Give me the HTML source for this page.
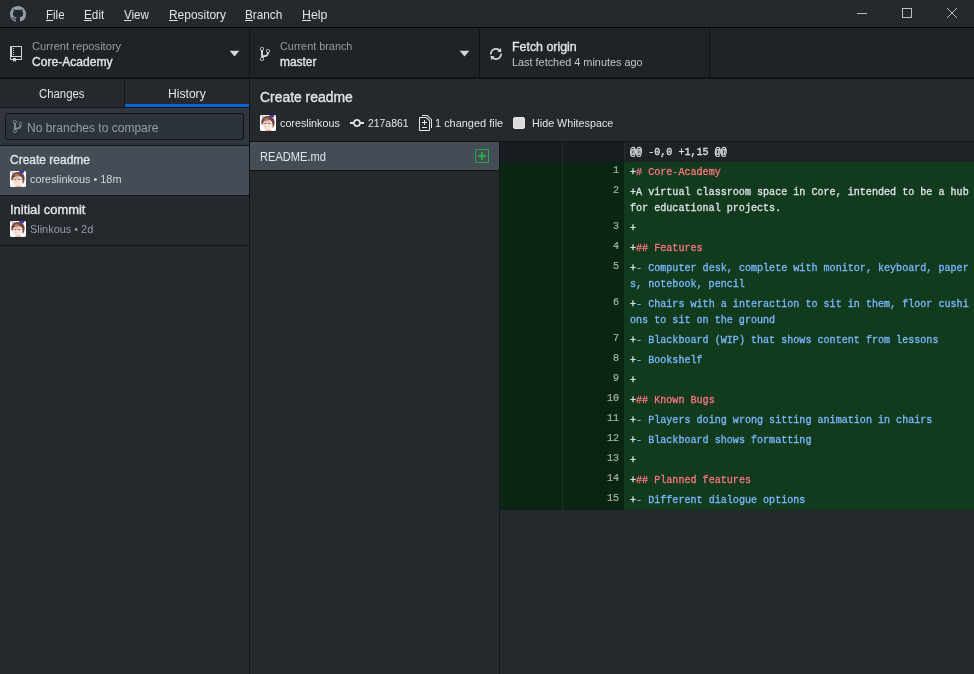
<!DOCTYPE html>
<html><head><meta charset="utf-8">
<style>
*{box-sizing:border-box;margin:0;padding:0}
html,body{width:974px;height:674px;overflow:hidden;background:#24292e;color:#d1d5da;font-family:"Liberation Sans",sans-serif;font-size:12px}
#titlebar{position:absolute;left:0;top:0;width:974px;height:28px;background:#24292e;border-bottom:1px solid #000}
#titlebar .menu{position:absolute;top:1px;transform-origin:0 0;height:27px;line-height:28px;font-size:12.5px;color:#e1e4e8;white-space:nowrap}
#titlebar .menu u{text-decoration:underline;text-underline-offset:1px}
#toolbar{position:absolute;left:0;top:28px;width:974px;height:51px;background:#1f2327;border-bottom:2px solid #121212;z-index:2}
.tb{position:absolute;top:0;height:49px;border-right:1px solid #141414}
.tb .t1{transform-origin:0 0;position:absolute;left:32px;top:11px;font-size:11.5px;color:#959da5;white-space:nowrap;line-height:14px}
.tb .t2{transform-origin:0 0;position:absolute;left:32px;top:27px;font-size:12px;font-weight:normal;-webkit-text-stroke:0.35px;color:#e1e4e8;white-space:nowrap;line-height:14px}
.tb svg{position:absolute}
.arrow{position:absolute;width:0;height:0;border-left:4.800px solid transparent;border-right:4.800px solid transparent;border-top:5.500px solid #d1d5da;top:22.700px}
#sidebar{position:absolute;left:0;top:78px;width:250px;height:596px;background:#24292e;border-right:1px solid #141414}
#tabs{position:absolute;left:0;top:0;width:249px;height:30px;border-bottom:1px solid #141414}
#tabs div{position:absolute;top:0;height:29px;}
#tabs span{position:absolute;top:1px;line-height:30px;font-size:12.5px;color:#e1e4e8;transform-origin:0 0;white-space:nowrap}
#tabs .a{left:0;width:125px;border-right:1px solid #141414}
#tabs .b{left:125px;width:124px;border-bottom:3px solid #0366d6;height:29px}
#filterrow{position:absolute;left:0;top:30px;width:249px;height:38px;background:#2f363d;border-bottom:1px solid #141414}
#filter{position:absolute;left:5px;top:5px;width:239px;height:27px;border:1px solid #141414;border-radius:3px;background:#2d333a;}
#filter span{position:absolute;left:21px;top:2px;line-height:25px;font-size:12.5px;color:#959da5;white-space:nowrap;transform-origin:0 0}
.commit{position:absolute;left:0;width:249px;height:50px;border-bottom:1px solid #141414}
.commit .s{transform-origin:0 0;position:absolute;left:10px;top:7px;font-weight:normal;-webkit-text-stroke:0.35px;font-size:12px;line-height:14px;white-space:nowrap;color:#e1e4e8}
.commit .av{position:absolute;left:10px;top:25px}
.commit .m{transform-origin:0 0;position:absolute;left:30px;top:26px;font-size:11.5px;line-height:14px;white-space:nowrap;color:#d1d5da}
.av{width:16px;height:16px;border-radius:2px;background:#fbf8f8;overflow:hidden;display:block}
#main{position:absolute;left:250px;top:78px;width:724px;height:596px;background:#24292e}
#summary{position:absolute;left:0;top:0;width:724px;height:64px;border-bottom:1px solid #141414}
#summary h1{transform-origin:0 0;position:absolute;left:10px;top:11px;font-size:14px;line-height:16px;font-weight:normal;-webkit-text-stroke:0.35px;color:#e1e4e8;white-space:nowrap}
#summary .i{transform-origin:0 0;position:absolute;top:38px;font-size:11.5px;line-height:14px;white-space:nowrap;color:#e1e4e8}
#files{position:absolute;left:0;top:64px;width:250px;height:532px;border-right:1px solid #141414}
#files .row{position:absolute;left:0;top:0;width:249px;height:29px;background:#444d56;border-bottom:1px solid #141414}
#files .row span{position:absolute;left:10px;top:1px;line-height:29px;font-size:12px;color:#e1e4e8;transform-origin:0 0}
#diff{position:absolute;left:250px;top:64px;width:474px;height:532px;font-family:"Liberation Mono",monospace;font-size:10.08px;will-change:transform}
.ln{position:absolute;left:0;width:474px;}
.ln .g1{position:absolute;left:0;top:0;width:63px;height:100%;border-right:1px solid #123a1c;background:#0a2612}
.ln .g2{position:absolute;left:63px;top:0;width:62px;height:100%;border-right:1px solid #123a1c;background:#0a2612;color:#a6b2a9;-webkit-text-stroke:0.2px;text-align:right;padding-right:5px;font-size:10.08px;line-height:18px}
.ln .c{position:absolute;left:125px;top:0;width:349px;height:100%;background:#123a1c;padding-left:5px;line-height:16px;padding-top:3px;white-space:pre;color:#dde2e6;-webkit-text-stroke:0.3px}
.hk .g1,.hk .g2{background:#181c20;border-right-color:#2a2f35}.hk .c{background:#1e2227;color:#dfe3e7}
.h{color:#f97583}.l{color:#79b8ff}
</style></head><body>
<svg width="0" height="0" style="position:absolute"><filter id="bl"><feGaussianBlur stdDeviation="0.45"/></filter></svg>
<div id="titlebar">
<svg style="position:absolute;left:10px;top:6px" width="16" height="16" viewBox="0 0 16 16"><path fill="#959da5" fill-rule="evenodd" d="M8 0C3.58 0 0 3.58 0 8c0 3.54 2.29 6.53 5.47 7.59.4.07.55-.17.55-.38 0-.19-.01-.82-.01-1.49-2.01.37-2.53-.49-2.69-.94-.09-.23-.48-.94-.82-1.13-.28-.15-.68-.52-.01-.53.63-.01 1.08.58 1.23.82.72 1.21 1.87.87 2.33.66.07-.52.28-.87.51-1.07-1.78-.2-3.64-.89-3.64-3.95 0-.87.31-1.59.82-2.15-.08-.2-.36-1.02.08-2.12 0 0 .67-.21 2.2.82.64-.18 1.32-.27 2-.27.68 0 1.36.09 2 .27 1.53-1.04 2.2-.82 2.2-.82.44 1.1.16 1.92.08 2.12.51.56.82 1.27.82 2.15 0 3.07-1.87 3.75-3.65 3.95.29.25.54.73.54 1.48 0 1.07-.01 1.93-.01 2.2 0 .21.15.46.55.38A8.013 8.013 0 0 0 16 8c0-4.42-3.58-8-8-8z"/></svg>
<div class="menu" style="left:45.800px;transform:scaleX(0.92)"><u>F</u>ile</div>
<div class="menu" style="left:83.800px;transform:scaleX(0.94)"><u>E</u>dit</div>
<div class="menu" style="left:123.800px;transform:scaleX(0.925)"><u>V</u>iew</div>
<div class="menu" style="left:168.500px;transform:scaleX(0.955)"><u>R</u>epository</div>
<div class="menu" style="left:245.400px;transform:scaleX(0.94)"><u>B</u>ranch</div>
<div class="menu" style="left:301.700px;transform:scaleX(0.985)"><u>H</u>elp</div>
<svg style="position:absolute;left:836px;top:0" width="138" height="28" viewBox="0 0 138 28"><g stroke="#b9bec4" stroke-width="1" fill="none"><path d="M21 13.5h10"/><rect x="66.500" y="8.500" width="9" height="9"/><path d="M111 8l10 10M121 8l-10 10"/></g></svg>
</div>
<div id="toolbar">
 <div class="tb" style="left:0;width:250px">
  <svg style="left:10px;top:17.500px" width="12" height="16" viewBox="0 0 12 16"><path fill="#d1d5da" fill-rule="evenodd" d="M4 9H3V8h1v1zm0-3H3v1h1V6zm0-2H3v1h1V4zm0-2H3v1h1V2zm8-1v12c0 .55-.45 1-1 1H6v2l-1.500-1.500L3 16v-2H1c-.55 0-1-.45-1-1V1c0-.55.45-1 1-1h10c.55 0 1 .45 1 1zm-1 10H1v2h2v-1h3v1h5v-2zm0-10H2v9h9V1z"/></svg>
  <div class="t1" style="transform:scaleX(0.969)">Current repository</div><div class="t2" style="transform:scaleX(1.008)">Core-Academy</div>
  <svg style="left:229px;top:22px" width="12" height="8" viewBox="0 0 12 8"><polygon fill="#d1d5da" points="0.6,0.7 10.4,0.7 5.500,6.400"/></svg>
 </div>
 <div class="tb" style="left:250px;width:230px">
  <svg style="left:10px;top:18px" width="10" height="16" viewBox="0 0 10 16"><path fill="#d1d5da" fill-rule="evenodd" d="M10 5c0-1.110-.89-2-2-2a1.993 1.993 0 0 0-1 3.720v.3c-.02.52-.23.98-.63 1.380-.4.4-.86.610-1.380.630-.83.020-1.480.160-2 .450V4.720a1.993 1.993 0 0 0-1-3.720C.88 1 0 1.890 0 3a2 2 0 0 0 1 1.720v6.560c-.59.350-1 .990-1 1.720 0 1.110.89 2 2 2 1.110 0 2-.89 2-2 0-.53-.2-1-.53-1.360.09-.06.48-.41.590-.47.250-.11.560-.17.940-.17 1.050-.05 1.950-.45 2.750-1.250s1.200-1.980 1.250-3.020h-.02C9.590 6.370 10 5.730 10 5zM2 1.800c.66 0 1.200.55 1.200 1.200 0 .65-.55 1.200-1.200 1.200C1.350 4.200.8 3.650.8 3c0-.65.55-1.200 1.200-1.200zm0 12.410c-.66 0-1.200-.55-1.200-1.200 0-.65.55-1.200 1.200-1.200.65 0 1.200.55 1.200 1.200 0 .65-.55 1.200-1.200 1.200zm6-8c-.66 0-1.200-.55-1.200-1.200 0-.65.55-1.200 1.200-1.200.65 0 1.200.55 1.200 1.200 0 .65-.55 1.200-1.200 1.200z"/></svg>
  <div class="t1" style="left:30px;transform:scaleX(0.944)">Current branch</div><div class="t2" style="left:30px;transform:scaleX(0.994)">master</div>
  <svg style="left:209px;top:22px" width="12" height="8" viewBox="0 0 12 8"><polygon fill="#d1d5da" points="0.6,0.7 10.4,0.7 5.500,6.400"/></svg>
 </div>
 <div class="tb" style="left:480px;width:230px">
  <svg style="left:10px;top:18px" width="12" height="16" viewBox="0 0 12 16"><path fill="#d1d5da" fill-rule="evenodd" d="M10.240 7.400a4.150 4.150 0 0 1-1.200 3.600 4.346 4.346 0 0 1-5.410.54L4.800 10.400.5 9.800l.6 4.200 1.310-1.260c2.360 1.740 5.700 1.570 7.840-.54a5.876 5.876 0 0 0 1.740-4.460l-1.750-.34zM2.960 5a4.346 4.346 0 0 1 5.410-.54L7.200 5.600l4.300.6-.6-4.200-1.310 1.260c-2.360-1.740-5.700-1.570-7.850.54C.5 5.030-.06 6.650.01 8.260l1.750.35A4.170 4.170 0 0 1 2.960 5z"/></svg>
  <div class="t1" style="left:32px;top:27px;color:#c0c5cb;transform:scaleX(0.946)">Last fetched 4 minutes ago</div><div class="t2" style="left:32px;top:12px;transform:scaleX(1.033)">Fetch origin</div>
 </div>
</div>
<div id="sidebar">
 <div id="tabs"><div class="a"><span style="left:39.300px;transform:scaleX(0.908)">Changes</span></div><div class="b"><span style="left:42.800px;transform:scaleX(0.97)">History</span></div></div>
 <div id="filterrow"><div id="filter"><svg style="position:absolute;left:7px;top:5px" width="9.4" height="15" viewBox="0 0 10 16"><path fill="#848c95" fill-rule="evenodd" d="M10 5c0-1.110-.89-2-2-2a1.993 1.993 0 0 0-1 3.720v.3c-.02.52-.23.98-.63 1.380-.4.4-.86.610-1.380.630-.83.020-1.480.160-2 .450V4.720a1.993 1.993 0 0 0-1-3.720C.88 1 0 1.890 0 3a2 2 0 0 0 1 1.720v6.560c-.59.350-1 .990-1 1.720 0 1.110.89 2 2 2 1.110 0 2-.89 2-2 0-.53-.2-1-.53-1.360.09-.06.48-.41.590-.47.250-.11.560-.17.940-.17 1.050-.05 1.950-.45 2.750-1.250s1.200-1.980 1.250-3.020h-.02C9.590 6.370 10 5.730 10 5zM2 1.800c.66 0 1.200.55 1.200 1.200 0 .65-.55 1.200-1.200 1.200C1.350 4.200.8 3.650.8 3c0-.65.55-1.200 1.200-1.200zm0 12.410c-.66 0-1.200-.55-1.200-1.200 0-.65.55-1.200 1.200-1.200.65 0 1.200.55 1.200 1.200 0 .65-.55 1.200-1.200 1.200zm6-8c-.66 0-1.200-.55-1.200-1.200 0-.65.55-1.200 1.200-1.200.65 0 1.200.55 1.200 1.200 0 .65-.55 1.200-1.200 1.200z"/></svg><span style="transform:scaleX(0.96)">No branches to compare</span></div></div>
 <div class="commit" style="top:68px;background:#444d56"><div class="s" style="transform:scaleX(0.999)">Create readme</div><svg class="av" width="16" height="16" viewBox="0 0 16 16"><rect width="16" height="16" fill="#fdfbfb"/><g filter="url(#bl)"><ellipse cx="11.600" cy="0.900" rx="2.700" ry="1.700" fill="#4136c9"/><circle cx="2.600" cy="1.600" r="0.800" fill="#7a62e0"/><ellipse cx="7.600" cy="10" rx="4.500" ry="5.500" fill="#f9e4da"/><path d="M1.600 9.200C0.300 4.500 3.800 0.900 7.800 1.100c4.200-.1 7.300 3 6.800 7-.2 2-.9 4.300-2 5 .3-3-.3-5.800-1.500-7.300C9 4.600 6 4.700 4.200 6.200 3.200 7.100 2.800 8.500 2.700 9.700z" fill="#74453a"/><ellipse cx="6.800" cy="4.300" rx="2.600" ry="1.500" fill="#a97762"/><ellipse cx="7.300" cy="6.200" rx="2.300" ry="0.900" fill="#d9b09c"/><path d="M3.400 8.300h7.800" stroke="#6e5049" stroke-width="0.500"/><circle cx="5.300" cy="8.600" r="0.550" fill="#5a3a33"/><circle cx="9.200" cy="8.600" r="0.550" fill="#5a3a33"/><ellipse cx="5.600" cy="11.600" rx="1.300" ry="1" fill="#f5c3ab" opacity="0.700"/><ellipse cx="8.600" cy="15.700" rx="3.200" ry="1.100" fill="#f3b18b"/></g></svg><div class="m" style="transform:scaleX(0.946)">coreslinkous • 18m</div></div>
 <div class="commit" style="top:118px"><div class="s" style="transform:scaleX(1.077)">Initial commit</div><svg class="av" width="16" height="16" viewBox="0 0 16 16"><rect width="16" height="16" fill="#fdfbfb"/><g filter="url(#bl)"><ellipse cx="11.600" cy="0.900" rx="2.700" ry="1.700" fill="#4136c9"/><circle cx="2.600" cy="1.600" r="0.800" fill="#7a62e0"/><ellipse cx="7.600" cy="10" rx="4.500" ry="5.500" fill="#f9e4da"/><path d="M1.600 9.200C0.300 4.500 3.800 0.900 7.800 1.100c4.200-.1 7.300 3 6.800 7-.2 2-.9 4.300-2 5 .3-3-.3-5.800-1.500-7.300C9 4.600 6 4.700 4.200 6.200 3.200 7.100 2.800 8.500 2.700 9.700z" fill="#74453a"/><ellipse cx="6.800" cy="4.300" rx="2.600" ry="1.500" fill="#a97762"/><ellipse cx="7.300" cy="6.200" rx="2.300" ry="0.900" fill="#d9b09c"/><path d="M3.400 8.300h7.800" stroke="#6e5049" stroke-width="0.500"/><circle cx="5.300" cy="8.600" r="0.550" fill="#5a3a33"/><circle cx="9.200" cy="8.600" r="0.550" fill="#5a3a33"/><ellipse cx="5.600" cy="11.600" rx="1.300" ry="1" fill="#f5c3ab" opacity="0.700"/><ellipse cx="8.600" cy="15.700" rx="3.200" ry="1.100" fill="#f3b18b"/></g></svg><div class="m" style="color:#959da5;transform:scaleX(0.948)">Slinkous • 2d</div></div>
</div>
<div id="main">
 <div id="summary"><h1 style="transform:scaleX(0.993)">Create readme</h1>
  <svg class="av" style="position:absolute;left:10px;top:37px" width="16" height="16" viewBox="0 0 16 16"><rect width="16" height="16" fill="#fdfbfb"/><g filter="url(#bl)"><ellipse cx="11.600" cy="0.900" rx="2.700" ry="1.700" fill="#4136c9"/><circle cx="2.600" cy="1.600" r="0.800" fill="#7a62e0"/><ellipse cx="7.600" cy="10" rx="4.500" ry="5.500" fill="#f9e4da"/><path d="M1.600 9.200C0.300 4.500 3.800 0.900 7.800 1.100c4.200-.1 7.300 3 6.800 7-.2 2-.9 4.300-2 5 .3-3-.3-5.800-1.500-7.300C9 4.600 6 4.700 4.200 6.200 3.200 7.100 2.800 8.500 2.700 9.700z" fill="#74453a"/><ellipse cx="6.800" cy="4.300" rx="2.600" ry="1.500" fill="#a97762"/><ellipse cx="7.300" cy="6.200" rx="2.300" ry="0.900" fill="#d9b09c"/><path d="M3.400 8.300h7.800" stroke="#6e5049" stroke-width="0.500"/><circle cx="5.300" cy="8.600" r="0.550" fill="#5a3a33"/><circle cx="9.200" cy="8.600" r="0.550" fill="#5a3a33"/><ellipse cx="5.600" cy="11.600" rx="1.300" ry="1" fill="#f5c3ab" opacity="0.700"/><ellipse cx="8.600" cy="15.700" rx="3.200" ry="1.100" fill="#f3b18b"/></g></svg>
  <div class="i" style="left:30px;transform:scaleX(0.936)">coreslinkous</div>
  <div class="i" style="left:117.800px;transform:scaleX(0.905)">217a861</div>
  <div class="i" style="left:185px;transform:scaleX(0.952)">1 changed file</div>
  <div class="i" style="left:282px;transform:scaleX(0.935)">Hide Whitespace</div>
<svg style="position:absolute;left:100px;top:37px" width="14" height="16" viewBox="0 0 14 16"><path fill="#e1e4e8" fill-rule="evenodd" d="M10.860 7c-.45-1.720-2-3-3.860-3-1.860 0-3.410 1.280-3.860 3H0v2h3.140c.45 1.720 2 3 3.860 3 1.860 0 3.410-1.280 3.860-3H14V7h-3.140zM7 10.200c-1.220 0-2.200-.98-2.200-2.200 0-1.220.98-2.200 2.200-2.200 1.220 0 2.200.98 2.200 2.200 0 1.220-.98 2.200-2.200 2.200z"/></svg>
  <svg style="position:absolute;left:169px;top:37px" width="13" height="16" viewBox="0 0 13 16"><path fill="#e1e4e8" fill-rule="evenodd" d="M6 7h2v1H6v2H5V8H3V7h2V5h1v2zm-3 6h5v-1H3v1zM7.500 2L11 5.500V15c0 .55-.45 1-1 1H1c-.55 0-1-.45-1-1V3c0-.55.45-1 1-1h6.500zM10 6L7 3H1v12h9V6zM8.500 0H3v1h5l4 4v8h1V4.500L8.500 0z"/></svg>
  <div style="position:absolute;left:263px;top:39px;width:12px;height:12px;background:#dcdcdc;border:1px solid #e6e6e6;border-radius:2px"></div>
 </div>
 <div id="files"><div class="row"><span style="transform:scaleX(0.925)">README.md</span><svg style="position:absolute;left:225px;top:6px" width="14" height="16" viewBox="0 0 14 16"><path fill="#28a745" fill-rule="evenodd" d="M13 1H1c-.55 0-1 .45-1 1v12c0 .55.45 1 1 1h12c.55 0 1-.45 1-1V2c0-.55-.45-1-1-1zm0 13H1V2h12v12zM6 9H3V7h3V4h2v3h3v2H8v3H6V9z"/></svg></div></div>
 <div id="diff">
<div class="ln hk" style="top:0px;height:20px"><div class="g1"></div><div class="g2"></div><div class="c">@@ -0,0 +1,15 @@</div></div>
<div class="ln" style="top:20px;height:20px"><div class="g1"></div><div class="g2">1</div><div class="c">+<span class="h"># Core-Academy</span></div></div>
<div class="ln" style="top:40px;height:36px"><div class="g1"></div><div class="g2">2</div><div class="c">+A virtual classroom space in Core, intended to be a hub
for educational projects.</div></div>
<div class="ln" style="top:76px;height:20px"><div class="g1"></div><div class="g2">3</div><div class="c">+</div></div>
<div class="ln" style="top:96px;height:20px"><div class="g1"></div><div class="g2">4</div><div class="c">+<span class="h">## Features</span></div></div>
<div class="ln" style="top:116px;height:36px"><div class="g1"></div><div class="g2">5</div><div class="c">+<span class="l">- Computer desk, complete with monitor, keyboard, paper</span>
<span class="l">s, notebook, pencil</span></div></div>
<div class="ln" style="top:152px;height:36px"><div class="g1"></div><div class="g2">6</div><div class="c">+<span class="l">- Chairs with a interaction to sit in them, floor cushi</span>
<span class="l">ons to sit on the ground</span></div></div>
<div class="ln" style="top:188px;height:20px"><div class="g1"></div><div class="g2">7</div><div class="c">+<span class="l">- Blackboard (WIP) that shows content from lessons</span></div></div>
<div class="ln" style="top:208px;height:20px"><div class="g1"></div><div class="g2">8</div><div class="c">+<span class="l">- Bookshelf</span></div></div>
<div class="ln" style="top:228px;height:20px"><div class="g1"></div><div class="g2">9</div><div class="c">+</div></div>
<div class="ln" style="top:248px;height:20px"><div class="g1"></div><div class="g2">10</div><div class="c">+<span class="h">## Known Bugs</span></div></div>
<div class="ln" style="top:268px;height:20px"><div class="g1"></div><div class="g2">11</div><div class="c">+<span class="l">- Players doing wrong sitting animation in chairs</span></div></div>
<div class="ln" style="top:288px;height:20px"><div class="g1"></div><div class="g2">12</div><div class="c">+<span class="l">- Blackboard shows formatting</span></div></div>
<div class="ln" style="top:308px;height:20px"><div class="g1"></div><div class="g2">13</div><div class="c">+</div></div>
<div class="ln" style="top:328px;height:20px"><div class="g1"></div><div class="g2">14</div><div class="c">+<span class="h">## Planned features</span></div></div>
<div class="ln" style="top:348px;height:20px"><div class="g1"></div><div class="g2">15</div><div class="c">+<span class="l">- Different dialogue options</span></div></div>
</div>
</div>
</body></html>
